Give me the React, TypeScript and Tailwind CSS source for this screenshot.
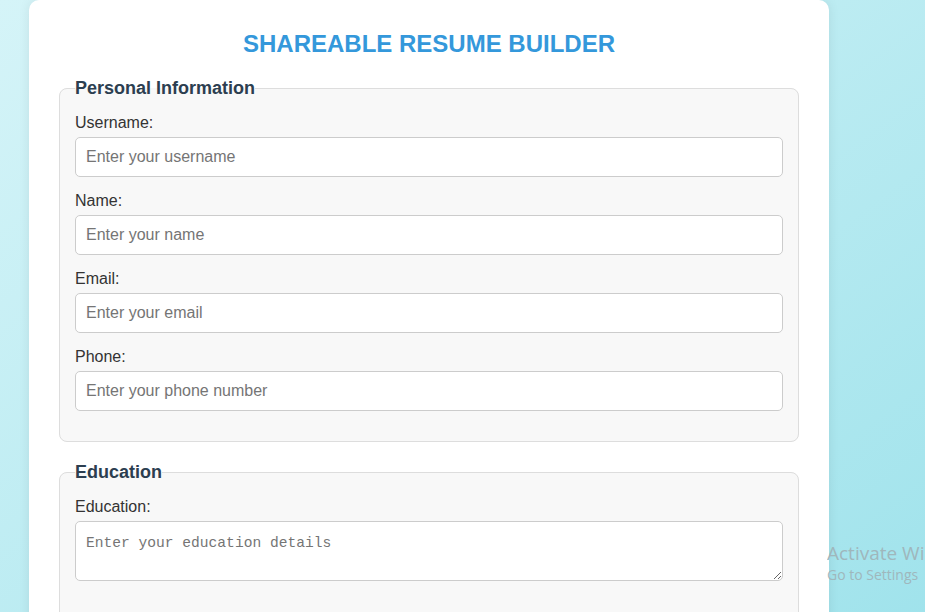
import React from "react";

const fields = [
  { id: "username", label: "Username:", placeholder: "Enter your username", type: "text" },
  { id: "name", label: "Name:", placeholder: "Enter your name", type: "text" },
  { id: "email", label: "Email:", placeholder: "Enter your email", type: "email" },
  { id: "phone", label: "Phone:", placeholder: "Enter your phone number", type: "tel" },
];

export default function App() {
  return (
    <div className="relative min-h-screen bg-linear-to-br from-[#d5f4f8] to-[#9de2eb] pl-[29px] font-['Liberation_Sans',Arial,sans-serif] overflow-hidden">
      <div className="w-[800px] bg-white rounded-[10px] p-[30px] shadow-[0_0_12px_rgba(0,0,0,0.08)]">
        {/* Title */}
        <h1 className="text-center text-[24px] leading-[28px] font-bold text-[#3498db] mb-5">
          SHAREABLE RESUME BUILDER
        </h1>

        {/* Personal info */}
        <fieldset className="border border-[#ddd] rounded-lg bg-[#f8f8f8] px-[15px] pt-[16px] pb-[15px] mb-5">
          <legend className="text-[18px] leading-5 font-bold text-[#2c3e50]">Personal Information</legend>
          {fields.map((f) => (
            <div key={f.id}>
              <label htmlFor={f.id} className="block text-base leading-[18px] text-[#333] mb-[5px]">
                {f.label}
              </label>
              <input
                id={f.id}
                type={f.type}
                placeholder={f.placeholder}
                className="block w-full h-10 px-[10px] border border-[#ccc] rounded-[5px] bg-white text-base placeholder:text-[#757575] mb-[15px]"
              />
            </div>
          ))}
        </fieldset>

        {/* Education */}
        <fieldset className="border border-[#ddd] rounded-lg bg-[#f8f8f8] px-[15px] pt-[16px] pb-[40px] mb-5">
          <legend className="text-[18px] leading-5 font-bold text-[#2c3e50]">Education</legend>
          <label htmlFor="education" className="block text-base leading-[18px] text-[#333] mb-[5px]">
            Education:
          </label>
          <textarea
            id="education"
            placeholder="Enter your education details"
            className="block w-full h-[60px] px-[10px] pt-[12px] border border-[#ccc] rounded-[5px] bg-white font-['Liberation_Mono',monospace] text-[14.6px] leading-[18px] placeholder:text-[#757575] mb-[15px]"
          />
        </fieldset>
      </div>

      {/* Windows watermark */}
      <div className="absolute left-[827px] top-[541px] w-[98px] overflow-hidden text-[#9fb7bc] font-['Open_Sans',sans-serif] whitespace-nowrap pointer-events-none">
        <div className="text-[19px] leading-6">Activate Wi</div>
        <div className="text-[14px] leading-5">Go to Settings</div>
      </div>
    </div>
  );
}
